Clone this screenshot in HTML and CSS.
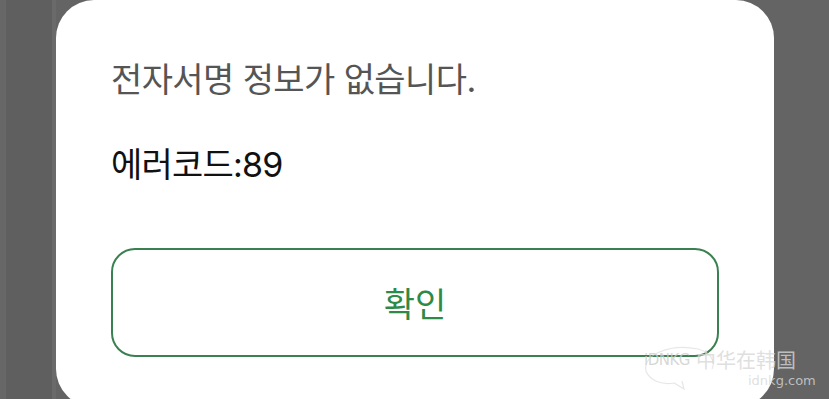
FILE: index.html
```html
<!DOCTYPE html>
<html lang="ko">
<head>
<meta charset="utf-8">
<link rel="stylesheet" href="styles.css">
</head>
<body>
<div class="screen">
  <div class="stripe"></div>
  <div class="dialog">
    <p class="message">전자서명 정보가 없습니다.</p>
    <p class="code">에러코드:89</p>
    <button class="confirm">확인</button>
  </div>
  <div class="watermark">
    <svg class="wm-bubble" width="80" height="50" viewBox="0 0 80 50"><path d="M6 30 C2 14 30 2 58 8 C70 11 76 20 72 28 M6 30 C10 40 22 44 34 42 L44 48 L42 40" fill="none" stroke="rgba(215,215,215,0.6)" stroke-width="1.2"/></svg>
    <div class="wm-row"><span class="wm-logo">iDNKG</span><span class="wm-cn">中华在韩国</span></div>
    <div class="wm-url">idnkg.com</div>
  </div>
</div>
</body>
</html>
```
FILE: styles.css
```css
html, body {
  margin: 0;
  padding: 0;
  width: 829px;
  height: 399px;
  overflow: hidden;
  background: #636363;
}
.screen {
  position: relative;
  width: 829px;
  height: 399px;
  display: flex;
  align-items: flex-start;
  padding-left: 56px;
  box-sizing: border-box;
  background: #646464;
}
.stripe {
  position: absolute;
  left: 0;
  top: 0;
  width: 56px;
  height: 399px;
  background: #5f5f5f;
  border-left: 6px solid #676767;
  box-sizing: border-box;
  box-shadow: inset -4px 0 0 #6a6a6a;
}
.dialog {
  position: relative;
  width: 718px;
  height: 407px;
  background: #ffffff;
  border-radius: 38px;
  box-sizing: border-box;
  padding: 55px 55px 0 55px;
  font-family: "Inter", "Noto Sans CJK KR", sans-serif;
}
.message {
  margin: 0;
  font-size: 34px;
  line-height: 50px;
  color: #555555;
  letter-spacing: -0.6px;
}
.code {
  margin: 35px 0 0 0;
  font-size: 34px;
  line-height: 50px;
  color: #111111;
  letter-spacing: -0.8px;
}
.confirm {
  display: block;
  margin-top: 58px;
  width: 608px;
  height: 109px;
  background: #ffffff;
  border: 2px solid #3b8050;
  border-radius: 24px;
  color: #2f8a47;
  font-family: "Noto Sans CJK KR", sans-serif;
  font-size: 34px;
  padding: 0;
}
.watermark {
  position: absolute;
  left: 644px;
  top: 347px;
  width: 170px;
  display: flex;
  flex-direction: column;
  color: rgba(215, 215, 215, 0.8);
}
.wm-bubble {
  position: absolute;
  left: -4px;
  top: -6px;
}
.wm-row {
  display: flex;
  align-items: center;
  height: 26px;
}
.wm-logo {
  font-family: "DejaVu Sans", sans-serif;
  font-size: 15px;
  letter-spacing: -0.5px;
  color: rgba(205, 205, 205, 0.8);
}
.wm-cn {
  font-family: "Noto Sans CJK SC", sans-serif;
  font-size: 20px;
  line-height: 26px;
  margin-left: 6px;
}
.wm-url {
  margin-left: 104px;
  font-family: "DejaVu Sans", sans-serif;
  font-size: 13px;
  line-height: 16px;
}
```
